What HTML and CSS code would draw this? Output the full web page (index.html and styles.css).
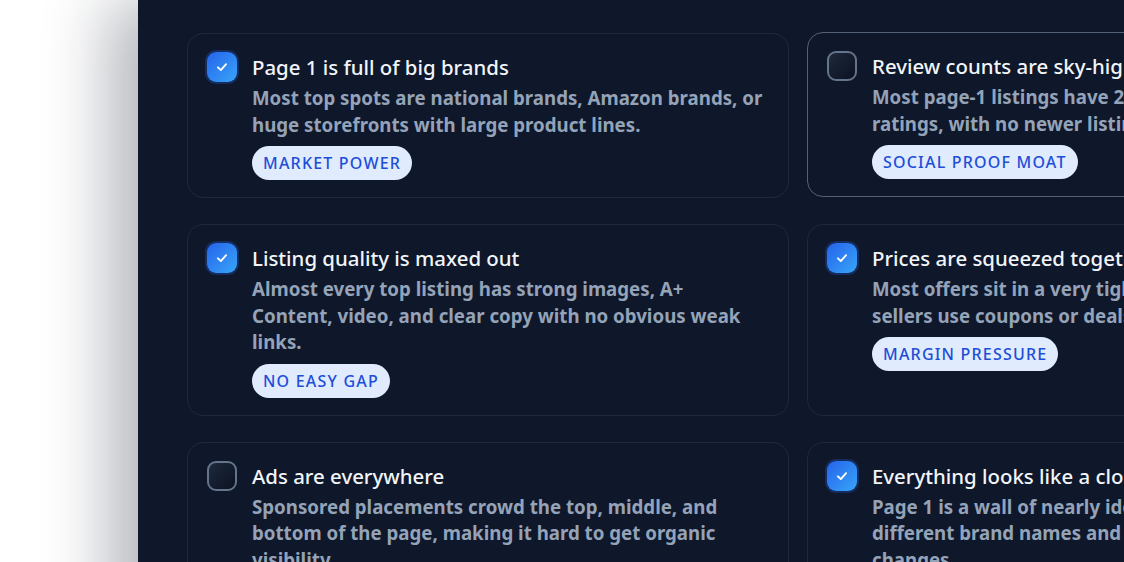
FILE: index.html
```html
<!DOCTYPE html>
<html lang="en">
<head>
<meta charset="utf-8">
<title>Page 1 signals</title>
<link rel="stylesheet" href="styles.css">
</head>
<body>
<main class="panel">
  <section class="grid">
    <article class="card">
      <span class="check is-checked"><svg viewBox="0 0 12 12"><path d="M2.5 6.3 L5 8.6 L9.5 3.6"/></svg></span>
      <div class="body">
        <h3 class="title">Page 1 is full of big brands</h3>
        <p class="desc">Most top spots are national brands, Amazon brands, or huge storefronts with large product lines.</p>
        <span class="tag">Market power</span>
      </div>
    </article>
    <article class="card is-hover">
      <span class="check"></span>
      <div class="body">
        <h3 class="title">Review counts are sky-high</h3>
        <p class="desc">Most page-1 listings have 2,000+ reviews and strong ratings, with no newer listings breaking in.</p>
        <span class="tag">Social proof moat</span>
      </div>
    </article>
    <article class="card">
      <span class="check is-checked"><svg viewBox="0 0 12 12"><path d="M2.5 6.3 L5 8.6 L9.5 3.6"/></svg></span>
      <div class="body">
        <h3 class="title">Listing quality is maxed out</h3>
        <p class="desc">Almost every top listing has strong images, A+ Content, video, and clear copy with no obvious weak links.</p>
        <span class="tag">No easy gap</span>
      </div>
    </article>
    <article class="card">
      <span class="check is-checked"><svg viewBox="0 0 12 12"><path d="M2.5 6.3 L5 8.6 L9.5 3.6"/></svg></span>
      <div class="body">
        <h3 class="title">Prices are squeezed together</h3>
        <p class="desc">Most offers sit in a very tight price band, and many sellers use coupons or deals to compete.</p>
        <span class="tag">Margin pressure</span>
      </div>
    </article>
    <article class="card">
      <span class="check"></span>
      <div class="body">
        <h3 class="title">Ads are everywhere</h3>
        <p class="desc">Sponsored placements crowd the top, middle, and bottom of the page, making it hard to get organic visibility.</p>
        <span class="tag">Pay to play</span>
      </div>
    </article>
    <article class="card">
      <span class="check is-checked"><svg viewBox="0 0 12 12"><path d="M2.5 6.3 L5 8.6 L9.5 3.6"/></svg></span>
      <div class="body">
        <h3 class="title">Everything looks like a clone</h3>
        <p class="desc">Page 1 is a wall of nearly identical products with different brand names and only small cosmetic changes.</p>
        <span class="tag">Commodity trap</span>
      </div>
    </article>
  </section>
</main>
</body>
</html>
```

FILE: styles.css
```css
html, body {
  margin: 0;
  padding: 0;
  background: #ffffff;
  overflow: hidden;
  height: 562px;
}

body {
  font-family: "Noto Sans", "DejaVu Sans", sans-serif;
}

.panel {
  margin-left: 138px;
  width: 1322px;
  min-height: 562px;
  box-sizing: border-box;
  padding: 32px 49px 40px;
  background: #0f172a;
  box-shadow: -30px 0 60px rgba(15, 23, 42, 0.3);
}

.grid {
  display: grid;
  grid-template-columns: 602px 602px;
  column-gap: 18px;
  row-gap: 25px;
}

.card {
  display: flex;
  align-items: flex-start;
  gap: 15px;
  padding: 19px 20px 17px 19px;
  border: 1px solid #1e293b;
  border-radius: 16px;
  background: #0f172a;
  margin-top: 1px;
}

.card.is-hover {
  border-color: #526178;
  margin-top: 0;
  margin-bottom: 1px;
}

.check {
  flex: none;
  width: 30px;
  height: 30px;
  box-sizing: border-box;
  border-radius: 9px;
  margin-top: -1px;
  border: 2px solid #64748b;
  background: linear-gradient(135deg, #1e293b 0%, #0b1222 100%);
  display: flex;
  align-items: center;
  justify-content: center;
}

.check.is-checked {
  border: none;
  background: linear-gradient(135deg, #2563eb 0%, #38a5f8 100%);
  box-shadow: 0 0 0 2px rgba(37, 99, 235, 0.28);
}

.check svg {
  width: 14px;
  height: 14px;
  fill: none;
  stroke: #ffffff;
  stroke-width: 1.6;
  stroke-linecap: round;
  stroke-linejoin: round;
}

.body {
  flex: 1;
  min-width: 0;
}

.title {
  margin: 0;
  font-size: 20.4px;
  line-height: 28px;
  font-weight: 500;
  color: #f1f5f9;
}

.desc {
  margin: 4px 0 0;
  font-size: 18.7px;
  line-height: 26.5px;
  font-weight: 700;
  color: #94a3b8;
}

.tag {
  display: inline-block;
  margin-top: 8px;
  height: 34px;
  line-height: 34px;
  padding: 0 11px;
  border-radius: 17px;
  background: #e0ebfd;
  color: #1d4ed8;
  font-size: 16px;
  font-weight: 500;
  letter-spacing: 1.2px;
  text-transform: uppercase;
}
```
